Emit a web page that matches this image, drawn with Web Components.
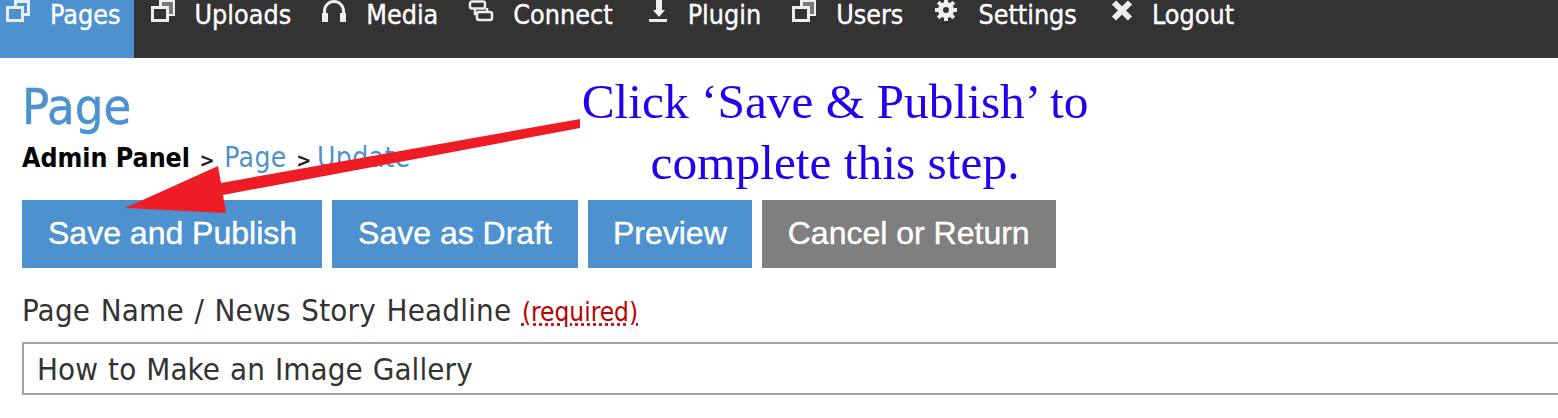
<!DOCTYPE html>
<html>
<head>
<meta charset="utf-8">
<style>
  html, body { margin: 0; padding: 0; background: #fff; overflow: hidden; }
  body { font-family: "DejaVu Sans Condensed", "DejaVu Sans", sans-serif; height: 418px; position: relative; }
</style>
</head>
<body>
<template id="nav-item">
  <style>
    :host { display: flex; height: 58px; padding: 0 15px 0 6px; color: #fff; font-size: 26.7px; box-sizing: border-box; -webkit-text-stroke: .35px #fff; }
    :host([active]) { background: #4d92cf; padding-right: 13px; margin-right: 1px; }
    .icon { width: 24px; height: 22px; margin-right: 20px; flex: none; }
    .icon ::slotted(svg) { display: block; width: 24px; height: 22px; overflow: visible; filter: blur(.4px); }
    .txt { line-height: 30px; white-space: nowrap; }
  </style>
  <div class="icon"><slot name="icon"></slot></div>
  <span class="txt"><slot></slot></span>
</template>

<template id="nav-bar">
  <style>
    :host { display: flex; background: #333; height: 58px; gap: 10px; }
  </style>
  <slot></slot>
</template>

<template id="page-head">
  <style>
    :host { display: block; padding: 21px 22px 0; height: 142px; box-sizing: border-box; }
    h1 { margin: 0; font-size: 50.3px; line-height: 56px; font-weight: 400; color: #4d92cf; -webkit-text-stroke: .4px #4d92cf; }
    .crumbs { font-size: 28px; line-height: 32px; letter-spacing: .4px; margin-top: 7px; color: #4d92cf; white-space: nowrap; }
    b { font-size: 26.5px; font-weight: 700; letter-spacing: 0; color: #000; }
    i { font-style: normal; font-weight: 700; color: #222; font-size: 20px; padding: 0 1px; }
    i:last-of-type { margin-right: -4px; }
  </style>
  <h1><slot name="title"></slot></h1>
  <div class="crumbs"><b>Admin Panel</b> <i>&gt;</i> Page <i>&gt;</i> Update</div>
</template>

<template id="action-btn">
  <style>
    :host { display: block; background: #4d92cf; color: #fff; height: 68px; padding: 0 26px; font: 400 32px/66px "Liberation Sans", Arial, sans-serif; white-space: nowrap; -webkit-text-stroke: .4px #fff; }
    :host([muted]) { background: #7f7f7f; }
  </style>
  <slot></slot>
</template>

<template id="btn-row">
  <style>
    :host { display: flex; gap: 10px; padding: 0 22px; }
  </style>
  <slot></slot>
</template>

<template id="text-field">
  <style>
    :host { display: block; padding: 0 0 0 22px; margin-top: 24px; font-size: 31px; color: #333; }
    label { display: block; line-height: 36px; letter-spacing: .2px; word-spacing: 1.5px; white-space: nowrap; }
    abbr { font-size: 26px; letter-spacing: 0; word-spacing: 0; color: #b00; text-decoration: underline dotted #b00; }
    .box { margin-top: 12px; border: 2px solid #a3a3a3; border-right: 0; height: 53px; box-sizing: border-box; padding-left: 13px; line-height: 51px; letter-spacing: .1px; word-spacing: 1px; white-space: nowrap; }
  </style>
  <label><slot name="label"></slot> <abbr>(required)</abbr></label>
  <div class="box"><slot></slot></div>
</template>

<template id="help-note">
  <style>
    :host { position: absolute; left: 560px; top: 71px; width: 550px; text-align: center; color: #2200ee; font: 400 49.4px/61px "Liberation Serif", "Times New Roman", serif; }
  </style>
  <slot></slot>
</template>

<template id="red-arrow">
  <style>
    :host { position: absolute; left: 0; top: 0; display: block; }
    svg { display: block; }
  </style>
  <svg width="600" height="240" viewBox="0 0 600 240">
    <path d="M580 119 L580 128 L223 195 L226 213 L125 208 L218 166 L221 183 Z" fill="#ee1c25"/>
  </svg>
</template>

<nav-bar>
  <nav-item active><svg slot="icon" viewBox="0 0 24 22"><path d="M8 0h16v16h-6v-3h3V3H11v3H8z M0 6h18v16H0z M3 9v10h12V9z" fill="#e6eef7" fill-rule="evenodd"/></svg>Pages</nav-item>
  <nav-item><svg slot="icon" viewBox="0 0 24 22"><path d="M8 0h16v16h-6V6H8z M0 6h18v16H0z M3 9v10h12V9z" fill="#eee" fill-rule="evenodd"/><path d="M11 2h11v12h-4V6h-7z" fill="#777"/></svg>Uploads</nav-item>
  <nav-item><svg slot="icon" viewBox="0 0 24 22"><path d="M2.500 14V11a9.500 9.500 0 0 1 19 0v3" fill="none" stroke="#eee" stroke-width="3"/><path d="M0 13h6v9H0z M18 13h6v9h-6z" fill="#eee"/></svg>Media</nav-item>
  <nav-item><svg slot="icon" viewBox="0 0 24 22"><path d="M3 1.500h11a2 2 0 0 1 2 2v3a2 2 0 0 1-2 2H3a2 2 0 0 1-2-2v-3a2 2 0 0 1 2-2z M10 12h11a2 2 0 0 1 2 2v4a2 2 0 0 1-2 2H10a2 2 0 0 1-2-2v-4a2 2 0 0 1 2-2z M6 9v5h2 M18 8v4" fill="none" stroke="#eee" stroke-width="2.500"/></svg>Connect</nav-item>
  <nav-item><svg slot="icon" viewBox="0 0 24 22"><path d="M12 0h6v10h3l-6 7-6-7h3z M5 19h18v3H5z" fill="#eee"/></svg>Plugin</nav-item>
  <nav-item><svg slot="icon" viewBox="0 0 24 22"><path d="M8 0h16v16h-6V6H8z M0 6h18v16H0z M3 9v10h12V9z" fill="#eee" fill-rule="evenodd"/><path d="M11 2h11v12h-4V6h-7z" fill="#777"/></svg>Users</nav-item>
  <nav-item><svg slot="icon" viewBox="0 0 24 22"><circle cx="12" cy="10" r="6" fill="none" stroke="#eee" stroke-width="4"/><path d="M12 -1v22M1 10h22M4.200 2.200l15.600 15.600M19.800 2.200L4.200 17.800" stroke="#eee" stroke-width="4"/><circle cx="12" cy="10" r="3" fill="#333"/></svg>Settings</nav-item>
  <nav-item><svg slot="icon" viewBox="0 0 24 22"><path d="M6 2.500l16 16M22 2.500l-16 16" stroke="#eee" stroke-width="6" fill="none"/></svg>Logout</nav-item>
</nav-bar>
<page-head><span slot="title">Page</span></page-head>
<btn-row>
  <action-btn style="padding-right:25px">Save and Publish</action-btn>
  <action-btn>Save as Draft</action-btn>
  <action-btn style="padding:0 25px">Preview</action-btn>
  <action-btn muted>Cancel or Return</action-btn>
</btn-row>
<text-field><span slot="label">Page Name / News Story Headline</span>How to Make an Image Gallery</text-field>
<red-arrow></red-arrow>
<help-note>Click ‘Save &amp; Publish’ to<br>complete this step.</help-note>

<script>
function define(name) {
  customElements.define(name, class extends HTMLElement {
    constructor() {
      super();
      var shadow = this.attachShadow({mode: 'open'});
      shadow.appendChild(document.getElementById(name).content.cloneNode(true));
    }
  });
}
['nav-item', 'nav-bar', 'page-head', 'action-btn', 'btn-row', 'text-field', 'help-note', 'red-arrow'].forEach(define);
</script>
</body>
</html>
